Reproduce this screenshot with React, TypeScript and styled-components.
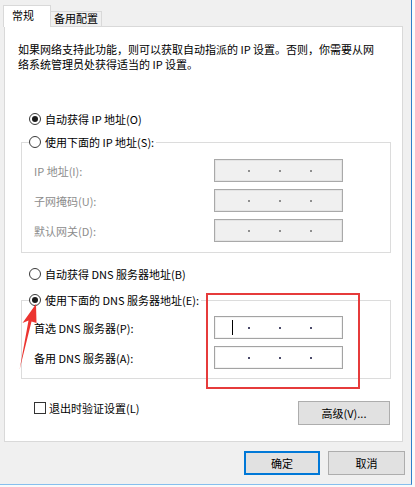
import React from "react";
import styled, { createGlobalStyle, css } from "styled-components";

const Global = createGlobalStyle`
  html, body { margin: 0; padding: 0; background: #fafafa; }
  body {
    font-family: "Noto Sans CJK SC", "Noto Sans", sans-serif;
    font-size: 11px;
    color: #000;
  }
  * { box-sizing: border-box; }
`;

const Window = styled.div`
  position: relative;
  width: 412px;
  height: 485px;
  background: #f0f0f0;
  border-right: 1px solid #2f7fc9;
  border-bottom: 1px solid #86bfee;
  padding: 5px 0 0 4px;
  display: flex;
  flex-direction: column;
`;

const TabRow = styled.div`
  position: relative;
  z-index: 1;
  display: flex;
  align-items: flex-end;
  height: 21px;
  margin-left: -1px;
`;

const Tab = styled.div<{ $active?: boolean }>`
  line-height: 14px;
  white-space: nowrap;
  border: 1px solid #d9d9d9;
  border-bottom: none;
  ${(p) =>
    p.$active
      ? css`
          width: 48px;
          height: 22px;
          margin-bottom: -1px;
          background: #fff;
          padding: 2px 0 0 8px;
        `
      : css`
          width: 51px;
          height: 15px;
          border-left: none;
          background: #f0f0f0;
          text-align: center;
          line-height: 13px;
        `}
`;

const Panel = styled.div`
  width: 399px;
  height: 416px;
  background: #fff;
  border: 1px solid #d9d9d9;
  display: flex;
  flex-direction: column;
`;

const Description = styled.p`
  margin: 15px 0 0 13px;
  line-height: 15px;
  white-space: nowrap;
`;

const RadioRow = styled.label<{ $top?: number }>`
  display: flex;
  align-items: center;
  gap: 4px;
  height: 14px;
  line-height: 14px;
  white-space: nowrap;
  margin-top: ${(p) => p.$top ?? 0}px;
  padding-left: ${(p) => (p.$top !== undefined ? 24 : 0)}px;
`;

const RadioMark = styled.span<{ $checked?: boolean }>`
  flex: none;
  width: 12px;
  height: 12px;
  border: 1px solid #3a3a3a;
  border-radius: 50%;
  background: #fff;
  display: grid;
  place-items: center;
  ${(p) =>
    p.$checked &&
    css`
      &::after {
        content: "";
        width: 6px;
        height: 6px;
        border-radius: 50%;
        background: #1b1b1b;
      }
    `}
`;

const Group = styled.fieldset<{ $top: number; $first: number }>`
  margin: ${(p) => p.$top}px 0 0 16px;
  width: 370px;
  min-width: 0;
  border: 1px solid #dcdcdc;
  padding: 0 0 ${(p) => (p.$first === 10 ? 10 : 9)}px 0;
  display: flex;
  flex-direction: column;
  gap: 7px;
  & > div:first-of-type {
    margin-top: ${(p) => p.$first}px;
  }
`;

const Legend = styled.legend`
  margin-left: 7px;
  padding: 0 2px 0 0;
`;

const FieldRow = styled.div`
  display: flex;
  align-items: center;
  height: 23px;
  padding-left: 12px;
`;

const FieldLabel = styled.span<{ $disabled?: boolean }>`
  width: 180px;
  flex: none;
  white-space: nowrap;
  color: ${(p) => (p.$disabled ? "#8c8c8c" : "#000")};
`;

const IPBox = styled.div<{ $disabled?: boolean }>`
  display: flex;
  align-items: center;
  width: 129px;
  height: 23px;
  border: 1px solid ${(p) => (p.$disabled ? "#a9a9a9" : "#a3a3a3")};
  box-shadow: inset 0 0 0 1px ${(p) => (p.$disabled ? "#e4e4e4" : "#f2f2f2")};
  background: ${(p) => (p.$disabled ? "#f0f0f0" : "#fff")};
`;

const Seg = styled.span<{ $w?: number }>`
  display: flex;
  align-items: center;
  height: 100%;
  width: ${(p) => (p.$w ? `${p.$w}px` : "auto")};
  flex: ${(p) => (p.$w ? "none" : "1")};
`;

const Dot = styled.span<{ $disabled?: boolean }>`
  flex: none;
  width: 2px;
  height: 2px;
  background: ${(p) => (p.$disabled ? "#8f8f8f" : "#4b4b6b")};
`;

const Caret = styled.span`
  width: 1px;
  height: 15px;
  margin-left: 17px;
  background: #000;
`;

const BottomPanelRow = styled.div`
  display: flex;
  justify-content: space-between;
  align-items: flex-start;
  margin-top: 22px;
  padding: 0 12px 0 29px;
`;

const CheckRow = styled.label`
  display: flex;
  align-items: center;
  gap: 3px;
  height: 14px;
  line-height: 14px;
  white-space: nowrap;
`;

const CheckMark = styled.span`
  flex: none;
  width: 12px;
  height: 12px;
  border: 1px solid #333;
  background: #fff;
`;

const Button = styled.button<{ $w: number; $default?: boolean }>`
  width: ${(p) => p.$w}px;
  height: 24px;
  padding: 0;
  font: inherit;
  line-height: 14px;
  color: #000;
  background: #e1e1e1;
  border: ${(p) => (p.$default ? "2px solid #0078d7" : "1px solid #adadad")};
  white-space: nowrap;
`;

const DialogButtons = styled.div`
  display: flex;
  justify-content: flex-end;
  gap: 8px;
  margin-top: 9px;
  padding-right: 6px;
`;

const RedBox = styled.div`
  position: absolute;
  left: 206px;
  top: 293px;
  width: 154px;
  height: 96px;
  border: 2px solid #e63b3b;
  pointer-events: none;
`;

const ArrowSvg = styled.svg`
  position: absolute;
  left: 0;
  top: 290px;
  width: 50px;
  height: 90px;
  pointer-events: none;
`;

function IPField({ disabled, caret }: { disabled?: boolean; caret?: boolean }) {
  return (
    <IPBox $disabled={disabled}>
      <Seg $w={33}>{caret && <Caret />}</Seg>
      <Dot $disabled={disabled} />
      <Seg $w={29} />
      <Dot $disabled={disabled} />
      <Seg $w={29} />
      <Dot $disabled={disabled} />
      <Seg />
    </IPBox>
  );
}

export default function App() {
  return (
    <>
      <Global />
      <Window>
        <TabRow>
          <Tab $active>常规</Tab>
          <Tab>备用配置</Tab>
        </TabRow>
        <Panel>
          <Description>
            如果网络支持此功能，则可以获取自动指派的 IP 设置。否则，你需要从网
            <br />
            络系统管理员处获得适当的 IP 设置。
          </Description>

          <RadioRow $top={40}>
            <RadioMark $checked />
            自动获得 IP 地址(O)
          </RadioRow>

          <Group $top={9} $first={10}>
            <Legend>
              <RadioRow>
                <RadioMark />
                使用下面的 IP 地址(S):
              </RadioRow>
            </Legend>
            <FieldRow>
              <FieldLabel $disabled>IP 地址(I):</FieldLabel>
              <IPField disabled />
            </FieldRow>
            <FieldRow>
              <FieldLabel $disabled>子网掩码(U):</FieldLabel>
              <IPField disabled />
            </FieldRow>
            <FieldRow>
              <FieldLabel $disabled>默认网关(D):</FieldLabel>
              <IPField disabled />
            </FieldRow>
          </Group>

          <RadioRow $top={14}>
            <RadioMark />
            自动获得 DNS 服务器地址(B)
          </RadioRow>

          <Group $top={12} $first={9}>
            <Legend>
              <RadioRow>
                <RadioMark $checked />
                使用下面的 DNS 服务器地址(E):
              </RadioRow>
            </Legend>
            <FieldRow>
              <FieldLabel>首选 DNS 服务器(P):</FieldLabel>
              <IPField caret />
            </FieldRow>
            <FieldRow>
              <FieldLabel>备用 DNS 服务器(A):</FieldLabel>
              <IPField />
            </FieldRow>
          </Group>

          <BottomPanelRow>
            <CheckRow>
              <CheckMark />
              退出时验证设置(L)
            </CheckRow>
            <Button $w={92}>高级(V)...</Button>
          </BottomPanelRow>
        </Panel>
        <DialogButtons>
          <Button $w={76} $default>
            确定
          </Button>
          <Button $w={77}>取消</Button>
        </DialogButtons>

        <RedBox />
        <ArrowSvg viewBox="0 0 50 90">
          <polygon
            points="36,14 36.5,33 31.5,31.5 19.5,80 28.5,30.5 22.5,33"
            fill="#ec3430"
          />
        </ArrowSvg>
      </Window>
    </>
  );
}
